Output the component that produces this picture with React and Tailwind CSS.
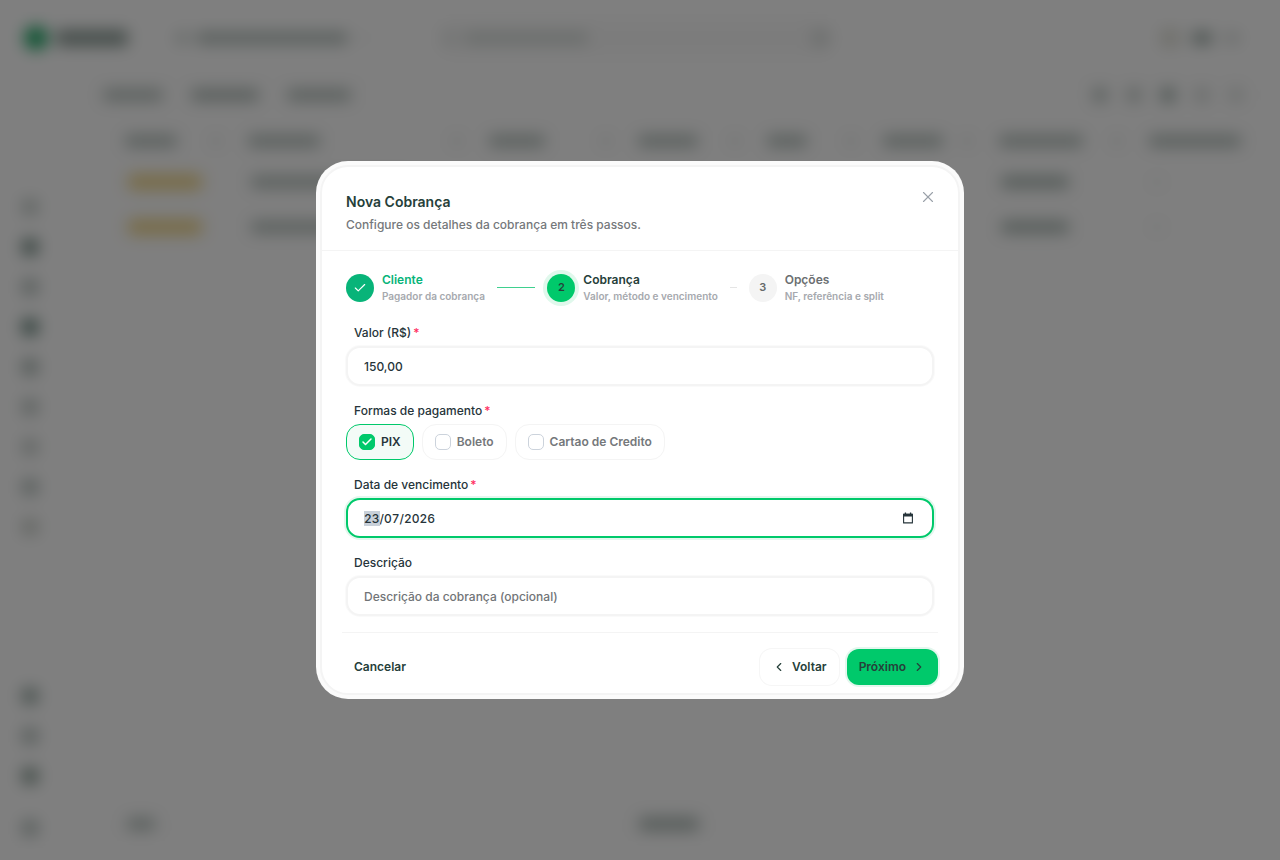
import { useEffect, useRef, useState } from "react";
import { Check, ChevronLeft, ChevronRight, X } from "lucide-react";

const sideTop = [
  "bg-[#c3ccc8]",
  "bg-[#6f8880]",
  "bg-[#b4bfbb]",
  "bg-[#5f7f76]",
  "bg-[#a8b5b0]",
  "bg-[#bcc5c1]",
  "bg-[#c6cdca]",
  "bg-[#b4bfbb]",
  "bg-[#c9cec8]",
];

const sideBottom = [
  "bg-[#93a59f]",
  "bg-[#b4bfbb]",
  "bg-[#84988f]",
  "mt-3 bg-[#b4bfbb]",
];

const columns = [
  { cell: "w-[123px]", bar: "w-13" },
  { cell: "w-[241px]", bar: "w-[72px]" },
  { cell: "w-[149px]", bar: "w-14" },
  { cell: "w-[129px]", bar: "w-[60px]" },
  { cell: "w-[116px]", bar: "w-10" },
  { cell: "w-[116px]", bar: "w-[60px]" },
  { cell: "w-[150px]", bar: "w-[84px]" },
  { cell: "w-[104px]", bar: "w-23" },
];

const steps = [
  { title: "Cliente", text: "Pagador da cobrança", state: "done" },
  { title: "Cobrança", text: "Valor, método e vencimento", state: "current" },
  { title: "Opções", text: "NF, referência e split", state: "next" },
];

const methods = ["PIX", "Boleto", "Cartao de Credito"];

function AppShell() {
  return (
    <div
      aria-hidden="true"
      className="flex min-h-screen flex-col overflow-hidden bg-white blur-sm"
    >
      <div className="flex h-[72px] items-center pt-1 pr-10 pl-6">
        <div className="h-6 w-6 rounded-full bg-[#1fa866]" />
        <div className="ml-2 h-4 w-[72px] rounded bg-[#8b9b95]" />
        <div className="ml-12 h-3 w-3 rounded bg-[#c8d0cc]" />
        <div className="ml-2 h-3 w-38 rounded bg-[#b4bfbb]" />
        <div className="ml-3 h-2 w-2 rounded bg-[#eceeed]" />
        <div className="ml-17 flex h-9 w-[400px] items-center rounded-2xl bg-[#f9f9f9] px-2">
          <div className="h-3 w-3 rounded bg-[#dfe3e1]" />
          <div className="ml-2 h-3 w-[124px] rounded bg-[#d4dad7]" />
          <div className="ml-auto h-4 w-4 rounded bg-[#d9dddb]" />
        </div>
        <div className="ml-auto flex items-center gap-3">
          <div className="h-5 w-5 rounded-md bg-[#e2e2da]" />
          <div className="h-3 w-5 rounded bg-[#94a49e]" />
          <div className="h-3 w-4 rounded bg-[#d9dddb]" />
        </div>
      </div>

      <div className="flex flex-1">
        <div className="flex w-[78px] flex-col justify-between pt-[127px] pb-6 pl-[22px]">
          <div className="flex flex-col gap-6">
            {sideTop.map((color, i) => (
              <div key={i} className={`h-4 w-4 rounded ${color}`} />
            ))}
          </div>
          <div className="flex flex-col gap-6">
            {sideBottom.map((color, i) => (
              <div key={i} className={`h-4 w-4 rounded ${color}`} />
            ))}
          </div>
        </div>

        <div className="mr-4 mb-6 flex flex-1 flex-col rounded-3xl border border-[#f4f4f4] bg-[#fefefe]">
          <div className="flex h-12 items-center pr-5 pb-1 pl-6">
            <div className="h-3 w-[60px] rounded bg-[#b7c1bd]" />
            <div className="ml-7 h-3 w-17 rounded bg-[#b0bbb7]" />
            <div className="ml-7 h-3 w-16 rounded bg-[#b4bfbb]" />
            <div className="ml-auto flex gap-5">
              <div className="h-3.5 w-3.5 rounded bg-[#b4bfbb]" />
              <div className="h-3.5 w-3.5 rounded bg-[#c0c8c5]" />
              <div className="h-3.5 w-3.5 rounded bg-[#9aaaa4]" />
              <div className="h-3.5 w-3.5 rounded bg-[#d2d7d5]" />
              <div className="h-3.5 w-3.5 rounded bg-[#dadedc]" />
            </div>
          </div>
          <div className="flex h-[38px] items-center pt-0.5 pl-[34px]">
            {columns.map((col, i) => (
              <div
                key={i}
                className={`flex shrink-0 items-center justify-between pr-4 pl-3 ${col.cell}`}
              >
                <div className={`h-3 shrink-0 rounded bg-[#b4bfbb] ${col.bar}`} />
                {i < columns.length - 1 && (
                  <div className="h-2 w-2 rounded bg-[#d2d7d5]" />
                )}
              </div>
            ))}
          </div>
          {[0, 1].map((row) => (
            <div key={row} className="flex h-[45px] items-center pl-12">
              <div className="h-4 w-19 rounded-lg bg-[#f0d78f]" />
              <div className="ml-12 h-3 w-40 rounded bg-[#b4bfbb]" />
              <div className="ml-[590px] h-3 w-17 rounded bg-[#a9b6b1]" />
              <div className="ml-21 h-1 w-2 rounded bg-[#d2d7d5]" />
            </div>
          ))}
          <div className="mt-auto flex items-center pb-1 pl-12">
            <div className="h-3 w-7 rounded bg-[#b4bfbb]" />
            <div className="ml-[484px] h-3.5 w-15 rounded bg-[#b0bbb7]" />
          </div>
        </div>
      </div>
    </div>
  );
}

function Step({ step, index }) {
  const circle = {
    done: "bg-[#08b479] text-white",
    current: "bg-[#00c96b] text-[#26403a] ring-4 ring-[#e0f8ec]",
    next: "bg-[#f4f4f4] text-[#666a6a]",
  };
  const title = {
    done: "text-[#08b479]",
    current: "text-[#26403a]",
    next: "text-[#6b6f72]",
  };

  return (
    <li className="flex items-center">
      <span
        className={`flex h-7 w-7 shrink-0 items-center justify-center rounded-full text-[11px] font-semibold ${circle[step.state]}`}
      >
        {step.state === "done" ? <Check size={14} strokeWidth={2} /> : index + 1}
      </span>
      <span className="ml-2 whitespace-nowrap">
        <span
          className={`block text-xs leading-[17px] font-semibold ${title[step.state]}`}
        >
          {step.title}
        </span>
        <span className="block text-[10px] leading-4 font-semibold text-[#a6a9ae]">
          {step.text}
        </span>
      </span>
      {index < steps.length - 1 && (
        <span
          className={`-mr-1 ml-3 h-px flex-1 ${step.state === "done" ? "bg-[#3fd08f]" : "bg-[#e5e5e5]"}`}
        />
      )}
    </li>
  );
}

function Label({ htmlFor, required, children }) {
  return (
    <label
      htmlFor={htmlFor}
      className="mb-[5px] ml-2 block text-xs leading-[17px] font-medium text-[#26343a]"
    >
      {children}
      {required && <span className="ml-0.5 text-[#ff2f62]">*</span>}
    </label>
  );
}

const inputClass =
  "block h-10 w-full rounded-[14px] border-2 border-[#f4f4f4] bg-white px-4 text-xs leading-[15px] font-medium text-[#26343a] outline-none ring-1 ring-[#fafafa] placeholder:text-[#717477] placeholder:opacity-100 focus:border-[#00c96b] focus:ring-2 focus:ring-[#e4f7ee]";

export default function App() {
  const [amount, setAmount] = useState("150,00");
  const [dueDate, setDueDate] = useState("23/07/2026");
  const [description, setDescription] = useState("");
  const [selected, setSelected] = useState(["PIX"]);
  const dateRef = useRef(null);

  useEffect(() => {
    // start on the day part of the date
    dateRef.current.focus();
    dateRef.current.setSelectionRange(0, 2);
  }, []);

  function toggleMethod(name) {
    setSelected((prev) =>
      prev.includes(name) ? prev.filter((m) => m !== name) : [...prev, name]
    );
  }

  return (
    <div className="font-['Inter',sans-serif]">
      <AppShell />

      <div className="fixed inset-0 grid place-items-center bg-black/50">
        <div
          role="dialog"
          aria-modal="true"
          aria-labelledby="dialog-title"
          className="w-full max-w-[648px] rounded-[32px] bg-[#fbfbfb] p-1"
        >
          <div className="rounded-[28px] border-2 border-[#f4f4f4] bg-white">
            <div className="flex h-21 items-start justify-between border-b border-[#f4f4f4] px-6 pt-6">
              <div>
                <h2
                  id="dialog-title"
                  className="text-sm leading-[22px] font-semibold text-[#26403a]"
                >
                  Nova Cobrança
                </h2>
                <p className="mt-0.5 text-xs leading-5 font-medium text-[#75787b]">
                  Configure os detalhes da cobrança em três passos.
                </p>
              </div>
              <button
                type="button"
                aria-label="Fechar"
                className="-mt-1 -mr-1 flex h-5 w-5 items-center justify-center text-[#9aa1a9]"
              >
                <X size={18} strokeWidth={1.5} />
              </button>
            </div>

            <div className="px-6 pt-5 pb-2">
              <ol className="mb-5 grid grid-cols-3 gap-4">
                {steps.map((step, i) => (
                  <Step key={step.title} step={step} index={i} />
                ))}
              </ol>

              <form className="space-y-4" onSubmit={(e) => e.preventDefault()}>
                <div>
                  <Label htmlFor="amount" required>
                    Valor (R$)
                  </Label>
                  <input
                    id="amount"
                    type="text"
                    value={amount}
                    onChange={(e) => setAmount(e.target.value)}
                    className={inputClass}
                  />
                </div>

                <fieldset>
                  <legend className="mb-[5px] ml-2 text-xs leading-[17px] font-medium text-[#26343a]">
                    Formas de pagamento
                    <span className="ml-0.5 text-[#ff2f62]">*</span>
                  </legend>
                  <div className="flex gap-2">
                    {methods.map((name) => {
                      const active = selected.includes(name);
                      return (
                        <label
                          key={name}
                          className={`flex h-9 items-center gap-1.5 rounded-[14px] border px-3 text-xs font-semibold ${
                            active
                              ? "border-[#00c96b] bg-[#f3fbf7] text-[#26343a]"
                              : "border-[#f4f4f4] bg-white text-[#75787b]"
                          }`}
                        >
                          <span className="relative h-4 w-4">
                            <input
                              type="checkbox"
                              checked={active}
                              onChange={() => toggleMethod(name)}
                              className="block h-4 w-4 appearance-none rounded-[5px] border border-[#ccd3dc] bg-white checked:border-[#00c96b] checked:bg-[#00c96b]"
                            />
                            {active && (
                              <Check
                                size={12}
                                strokeWidth={3}
                                className="pointer-events-none absolute inset-0 m-auto text-white"
                              />
                            )}
                          </span>
                          {name}
                        </label>
                      );
                    })}
                  </div>
                </fieldset>

                <div>
                  <Label htmlFor="due-date" required>
                    Data de vencimento
                  </Label>
                  <div className="relative">
                    <input
                      id="due-date"
                      ref={dateRef}
                      type="text"
                      value={dueDate}
                      onChange={(e) => setDueDate(e.target.value)}
                      className={`${inputClass} tabular-nums selection:bg-[#c8d0d9] selection:text-[#26343a]`}
                    />
                    <button
                      type="button"
                      aria-label="Abrir calendário"
                      className="absolute inset-y-0 right-5 text-[#26343a]"
                    >
                      <svg width="12" height="12" viewBox="0 0 12 12" fill="none">
                        <path
                          d="M1.6 2.2h8.8v8.7H1.6z"
                          stroke="currentColor"
                          strokeWidth="1.1"
                          strokeLinejoin="round"
                        />
                        <path
                          d="M1.2 1.8h9.6v2.7H1.2zM2.8.6h1.3v1.6H2.8zM7.9.6h1.3v1.6H7.9z"
                          fill="currentColor"
                        />
                      </svg>
                    </button>
                  </div>
                </div>

                <div>
                  <Label htmlFor="description">Descrição</Label>
                  <input
                    id="description"
                    type="text"
                    value={description}
                    onChange={(e) => setDescription(e.target.value)}
                    placeholder="Descrição da cobrança (opcional)"
                    className={inputClass}
                  />
                </div>

                <div className="-mx-1 flex items-center border-t border-[#f4f4f4] pt-4 text-xs font-semibold text-[#26403a]">
                  <button type="button" className="h-9 px-3">
                    Cancelar
                  </button>
                  <button
                    type="button"
                    className="ml-auto flex h-9 items-center gap-1.5 rounded-xl bg-white px-3 ring-1 ring-[#f6f6f6]"
                  >
                    <ChevronLeft size={14} strokeWidth={2} />
                    Voltar
                  </button>
                  <button
                    type="submit"
                    className="ml-2 flex h-9 items-center gap-1.5 rounded-xl bg-[#00c96b] px-3 ring-2 ring-[#e4f7ee]"
                  >
                    Próximo
                    <ChevronRight size={14} strokeWidth={2} />
                  </button>
                </div>
              </form>
            </div>
          </div>
        </div>
      </div>
    </div>
  );
}
